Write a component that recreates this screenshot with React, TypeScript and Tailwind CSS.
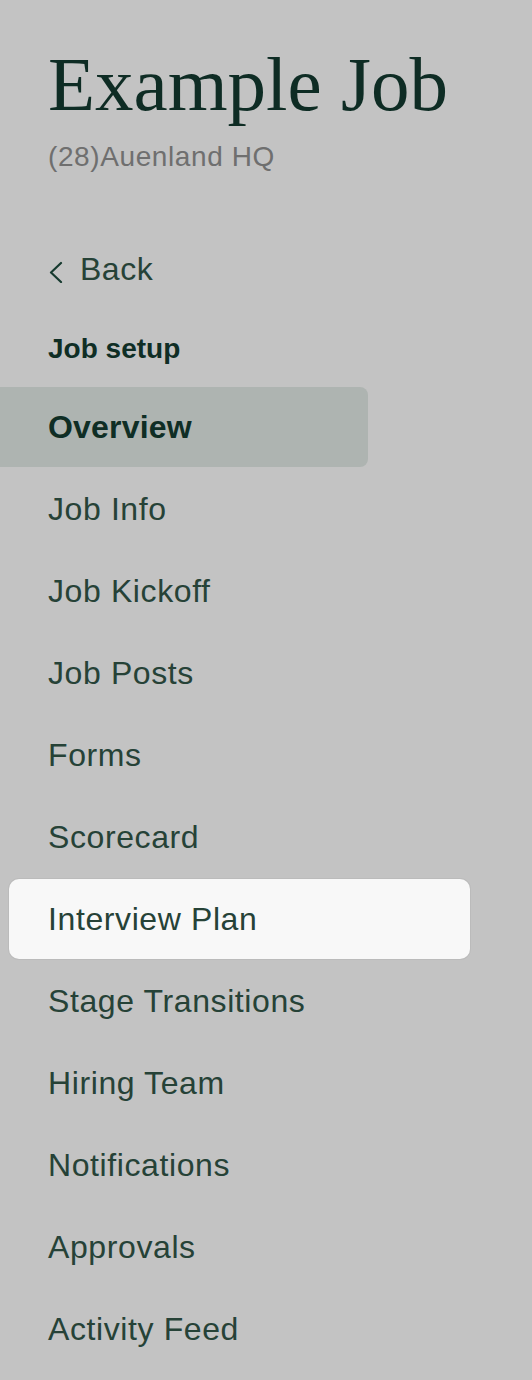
import React from "react";

const NAV_ITEMS = [
  "Job Info",
  "Job Kickoff",
  "Job Posts",
  "Forms",
  "Scorecard",
  "Interview Plan",
  "Stage Transitions",
  "Hiring Team",
  "Notifications",
  "Approvals",
  "Activity Feed",
];

const sans = "font-['Liberation_Sans',Arial,sans-serif]";

export default function App() {
  return (
    <div className={`min-h-[1380px] w-[532px] overflow-hidden bg-[#c3c3c3] ${sans}`}>
      <header className="px-[48px] pt-[46px]">
        <h1 className="font-['Liberation_Serif','Times_New_Roman',serif] text-[77px] leading-[76px] text-[#0e2c24]">
          Example Job
        </h1>
        <p className="mt-[19px] text-[28px] leading-[32px] tracking-[0.6px] text-[#6f6f6f]">(28)Auenland HQ</p>
      </header>

      <a href="#" className="mt-[76px] flex items-center gap-[16px] px-[48px] text-[32px] leading-[40px] tracking-[0.5px] text-[#264237]">
        <svg width="16" height="22" viewBox="0 0 16 22" fill="none" className="mt-[6px] shrink-0">
          <path d="M13 2 L3 11.5 L13 21" stroke="#163a2f" strokeWidth="2.2" strokeLinecap="round" strokeLinejoin="round" />
        </svg>
        Back
      </a>

      <h2 className="mt-[40px] px-[48px] text-[28px] font-bold leading-[40px] text-[#0f2e25]">Job setup</h2>

      <nav className="mt-[18px] flex flex-col gap-[2px] tracking-[0.6px]">
        <div className="flex h-[80px] w-[368px] items-center rounded-r-[8px] bg-[#aeb4b1] pl-[48px] text-[32px] font-bold tracking-[0.2px] text-[#0f2e25]">
          Overview
        </div>
        {NAV_ITEMS.map((item) =>
          item === "Interview Plan" ? (
            <div
              key={item}
              className="ml-[9px] flex h-[80px] w-[461px] items-center rounded-[10px] bg-[#f8f8f8] pl-[39px] text-[32px] text-[#264237] shadow-[0_0_0_1px_rgba(0,0,0,0.04)]"
            >
              {item}
            </div>
          ) : (
            <div key={item} className="flex h-[80px] items-center pl-[48px] text-[32px] text-[#264237]">
              {item}
            </div>
          ),
        )}
      </nav>
    </div>
  );
}
